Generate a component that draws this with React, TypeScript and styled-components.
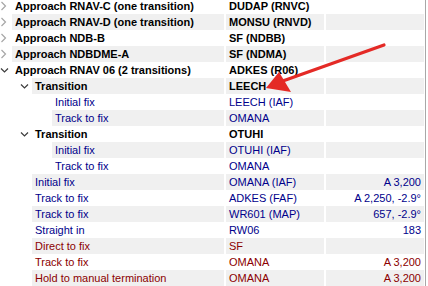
import React from "react";
import styled, { createGlobalStyle } from "styled-components";

const Global = createGlobalStyle`
  html, body { margin: 0; padding: 0; background: #ffffff; }
  body { font-family: "Liberation Sans", Arial, sans-serif; font-size: 11px; overflow: hidden; }
`;

type Kind = "group" | "blue" | "red";
type RowData = {
  level: number;
  chevron?: "open" | "closed";
  name: string;
  ident: string;
  value?: string;
  kind: Kind;
};

const rows: RowData[] = [
  { level: 0, chevron: "closed", name: "Approach RNAV-C (one transition)", ident: "DUDAP (RNVC)", kind: "group" },
  { level: 0, chevron: "closed", name: "Approach RNAV-D (one transition)", ident: "MONSU (RNVD)", kind: "group" },
  { level: 0, chevron: "closed", name: "Approach NDB-B", ident: "SF (NDBB)", kind: "group" },
  { level: 0, chevron: "closed", name: "Approach NDBDME-A", ident: "SF (NDMA)", kind: "group" },
  { level: 0, chevron: "open", name: "Approach RNAV 06 (2 transitions)", ident: "ADKES (R06)", kind: "group" },
  { level: 1, chevron: "open", name: "Transition", ident: "LEECH", kind: "group" },
  { level: 2, name: "Initial fix", ident: "LEECH (IAF)", kind: "blue" },
  { level: 2, name: "Track to fix", ident: "OMANA", kind: "blue" },
  { level: 1, chevron: "open", name: "Transition", ident: "OTUHI", kind: "group" },
  { level: 2, name: "Initial fix", ident: "OTUHI (IAF)", kind: "blue" },
  { level: 2, name: "Track to fix", ident: "OMANA", kind: "blue" },
  { level: 1, name: "Initial fix", ident: "OMANA (IAF)", value: "A 3,200", kind: "blue" },
  { level: 1, name: "Track to fix", ident: "ADKES (FAF)", value: "A 2,250, -2.9°", kind: "blue" },
  { level: 1, name: "Track to fix", ident: "WR601 (MAP)", value: "657, -2.9°", kind: "blue" },
  { level: 1, name: "Straight in", ident: "RW06", value: "183", kind: "blue" },
  { level: 1, name: "Direct to fix", ident: "SF", kind: "red" },
  { level: 1, name: "Track to fix", ident: "OMANA", value: "A 3,200", kind: "red" },
  { level: 1, name: "Hold to manual termination", ident: "OMANA", value: "A 3,200", kind: "red" },
];

const colorFor = (k: Kind) => (k === "group" ? "#000000" : k === "blue" ? "#00008b" : "#8b0000");

const Viewport = styled.div`
  position: relative;
  width: 428px;
  height: 286px;
  overflow: hidden;
  background: #ffffff;
  display: flex;
`;

const TreeView = styled.div`
  width: 425px;
  margin-top: -2px;
  display: flex;
  flex-direction: column;
`;

const Border = styled.div`
  width: 1px;
  height: 286px;
  background: #a8a8a8;
`;

const Row = styled.div`
  display: grid;
  grid-template-columns: 224px 98px 98px;
  column-gap: 2px;
  height: 16px;
`;

const TreeCell = styled.div<{ $level: number }>`
  display: flex;
  align-items: stretch;
  padding-left: ${(p) => p.$level * 20}px;
`;

const Expander = styled.div`
  width: 12px;
  flex: 0 0 12px;
  display: flex;
  align-items: center;
  justify-content: flex-start;
`;

const Cell = styled.div<{ $alt: boolean; $kind: Kind; $right?: boolean }>`
  flex: 1;
  min-width: 0;
  background: ${(p) => (p.$alt ? "#f0f0f0" : "#ffffff")};
  color: ${(p) => colorFor(p.$kind)};
  font-weight: ${(p) => (p.$kind === "group" ? 700 : 400)};
  line-height: 16px;
  white-space: nowrap;
  overflow: hidden;
  padding: ${(p) => (p.$right ? "0 3px 0 0" : "0 0 0 3px")};
  text-align: ${(p) => (p.$right ? "right" : "left")};
`;

const Overlay = styled.svg`
  position: absolute;
  left: 0;
  top: 0;
  pointer-events: none;
`;

const Chevron: React.FC<{ open: boolean }> = ({ open }) =>
  open ? (
    <svg width="9" height="7" viewBox="0 0 9 7">
      <polyline points="1,1.5 4.5,5 8,1.5" fill="none" stroke="#3c3c3c" strokeWidth="1.2" />
    </svg>
  ) : (
    <svg width="7" height="10" viewBox="0 0 7 10">
      <polyline points="1.5,1 5.5,5 1.5,9" fill="none" stroke="#a6a6a6" strokeWidth="1.2" />
    </svg>
  );

export default function App() {
  return (
    <>
      <Global />
      <Viewport>
        <TreeView>
          {rows.map((r, i) => {
            const alt = i % 2 === 1;
            return (
              <Row key={i}>
                <TreeCell $level={r.level}>
                  <Expander>{r.chevron ? <Chevron open={r.chevron === "open"} /> : null}</Expander>
                  <Cell $alt={alt} $kind={r.kind}>{r.name}</Cell>
                </TreeCell>
                <Cell $alt={alt} $kind={r.kind}>{r.ident}</Cell>
                <Cell $alt={alt} $kind={r.kind === "group" ? "blue" : r.kind} $right>
                  {r.value ?? ""}
                </Cell>
              </Row>
            );
          })}
        </TreeView>
        <Border />
        <Overlay width="428" height="286" viewBox="0 0 428 286">
          <line x1="384" y1="45" x2="280" y2="82" stroke="#e42a26" strokeWidth="3.2" strokeLinecap="round" />
          <polygon points="266,88 279,72 291,92" fill="#e42a26" />
        </Overlay>
      </Viewport>
    </>
  );
}
